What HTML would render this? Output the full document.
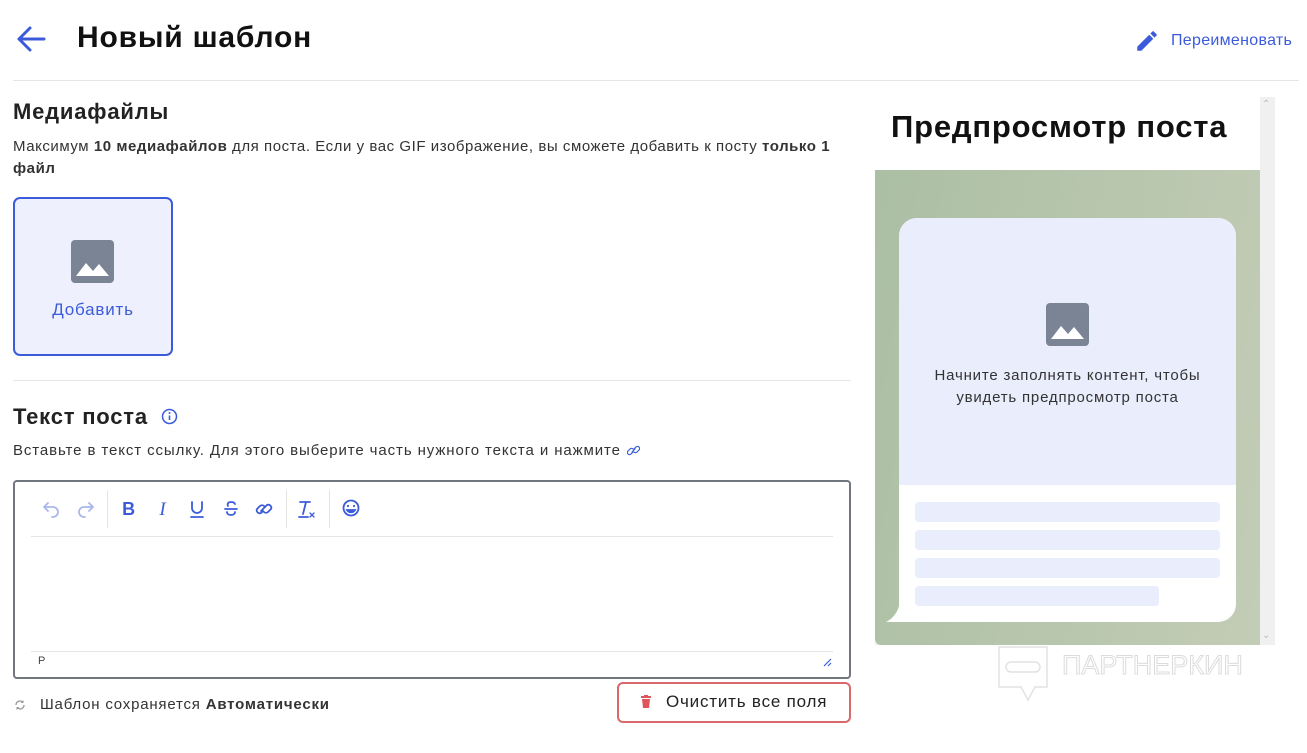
<!DOCTYPE html>
<html><head><meta charset="utf-8"><style>
*{box-sizing:border-box;margin:0;padding:0}
body{width:1307px;height:753px;overflow:hidden;background:#fff;font-family:"Liberation Sans",sans-serif;color:#222;position:relative;letter-spacing:0.8px}
.a{position:absolute}
.blue{color:#3b5bdb}
</style></head><body>
<svg class="a" style="left:15px;top:25px" width="32" height="28" viewBox="0 0 32 28"><path d="M29 14H4M15 3L4 14l11 11" fill="none" stroke="#3b5bdb" stroke-width="3" stroke-linecap="round" stroke-linejoin="round"/></svg>
<div class="a" style="left:77px;top:21px;font-size:30px;font-weight:bold;color:#111">Новый шаблон</div>
<svg class="a" style="left:1133px;top:28px" width="28" height="26" viewBox="0 0 24 24"><path d="M3 17.25V21h3.75L17.81 9.94l-3.75-3.75L3 17.25zM20.71 7.04a1 1 0 000-1.41l-2.34-2.34a1 1 0 00-1.41 0l-1.83 1.83 3.75 3.75 1.83-1.83z" fill="#3b5bdb"/></svg>
<div class="a blue" style="left:1171px;top:32px;font-size:16px;letter-spacing:0.3px">Переименовать</div>
<div class="a" style="left:13px;top:80px;width:1286px;height:1px;background:#e5e5e5"></div>

<div class="a" style="left:13px;top:99px;font-size:22px;font-weight:bold">Медиафайлы</div>
<div class="a" style="left:13px;top:136px;width:840px;font-size:15px;line-height:22px;color:#333;letter-spacing:0.55px">Максимум <b>10 медиафайлов</b> для поста. Если у вас GIF изображение, вы сможете добавить к посту <b>только 1<br>файл</b></div>
<div class="a" style="left:13px;top:197px;width:160px;height:159px;border:2px solid #3b5bdb;border-radius:7px;background:#eef1fd"></div>
<svg class="a" style="left:71px;top:240px" width="43" height="43" viewBox="0 0 43 43"><rect width="43" height="43" rx="4" fill="#7b8494"/><path d="M5 36l10-13 7 8 6-7 10 12z" fill="#fff"/></svg>
<div class="a blue" style="left:13px;top:300px;width:160px;text-align:center;font-size:17px">Добавить</div>
<div class="a" style="left:13px;top:380px;width:838px;height:1px;background:#e5e5e5"></div>

<div class="a" style="left:13px;top:404px;font-size:22px;font-weight:bold">Текст поста</div>
<svg class="a" style="left:161px;top:408px" width="17" height="17" viewBox="0 0 17 17"><circle cx="8.5" cy="8.5" r="7" fill="none" stroke="#3b5bdb" stroke-width="1.5"/><path d="M8.5 7.5v4.5" stroke="#3b5bdb" stroke-width="1.6"/><circle cx="8.5" cy="5" r="1" fill="#3b5bdb"/></svg>
<div class="a" style="left:13px;top:442px;font-size:15px;color:#333;letter-spacing:0.9px">Вставьте в текст ссылку. Для этого выберите часть нужного текста и нажмите</div>
<svg class="a" style="left:627px;top:444px" width="13" height="13" viewBox="0 0 13 13"><g fill="none" stroke="#3b5bdb" stroke-width="1.2" stroke-linecap="round"><path d="M6 8l-2 2a2 2 0 01-3-3l2-2a2 2 0 013 0M7 5l2-2a2 2 0 013 3l-2 2a2 2 0 01-3 0M5 8l3-3"/></g></svg>

<div class="a" style="left:13px;top:480px;width:838px;height:199px;border:2px solid #70757e;border-radius:4px"></div>
<div class="a" style="left:31px;top:536px;width:802px;height:1px;background:#e5e5e5"></div>
<div class="a" style="left:31px;top:651px;width:802px;height:1px;background:#e5e5e5"></div>
<div class="a" style="left:107px;top:490px;width:1px;height:38px;background:#e5e5e5"></div>
<div class="a" style="left:286px;top:490px;width:1px;height:38px;background:#e5e5e5"></div>
<div class="a" style="left:329px;top:490px;width:1px;height:38px;background:#e5e5e5"></div>
<svg class="a" style="left:40px;top:497px" width="330" height="24" viewBox="0 0 330 24">
<g fill="none" stroke-width="1.8" stroke-linecap="round" stroke-linejoin="round">
<path d="M8 6L4 10l4 4M4 10h9a5 5 0 010 10h-1" stroke="#a9b8ec"/>
<path d="M49 6l4 4-4 4M53 10h-9a5 5 0 000 10h1" stroke="#a9b8ec"/>
</g>
<text x="89" y="18" font-family="Liberation Sans" font-weight="bold" font-size="18" fill="#3b5bdb" text-anchor="middle">B</text>
<text x="123" y="18" font-family="Liberation Serif" font-style="italic" font-size="19" fill="#3b5bdb" text-anchor="middle">I</text>
<g fill="none" stroke="#3b5bdb" stroke-width="1.8" stroke-linecap="round">
<path d="M152 5v6a5 5 0 0010 0V5M151 20h12"/>
<path d="M185 12h12M195 7a4 3 0 00-4-2c-3 0-4 2-3 4M187 15c0 2 2 3 4 3s4-1 4-3"/>
<path d="M223 14l-2 2a3 3 0 01-4-4l3-3a3 3 0 014 0M225 10l2-2a3 3 0 014 4l-3 3a3 3 0 01-4 0M221 14l6-6"/>
<path d="M260 5h10M266 5l-3 12M259 20h9"/>
<path d="M270 16l4 4M274 16l-4 4" stroke-width="1.3"/>
<circle cx="311" cy="11" r="7.5"/>
<path d="M307 13a4.5 4 0 008 0z" fill="#3b5bdb"/>
</g>
<circle cx="308" cy="9" r="1.1" fill="#3b5bdb"/><circle cx="314" cy="9" r="1.1" fill="#3b5bdb"/>
</svg>
<div class="a" style="left:38px;top:655px;font-size:11px;color:#444">P</div>
<svg class="a" style="left:822px;top:657px" width="10" height="10" viewBox="0 0 10 10"><path d="M9 2L2 9M9 6L6 9" stroke="#3b5bdb" stroke-width="1.2"/></svg>

<svg class="a" style="left:14px;top:699px" width="12" height="12" viewBox="0 0 12 12"><g fill="none" stroke="#999" stroke-width="1.3"><path d="M2 6a4 4 0 017-2.6M10 6a4 4 0 01-7 2.6"/></g><path d="M9.5 1v3h-3z" fill="#999"/><path d="M2.5 11V8h3z" fill="#999"/></svg>
<div class="a" style="left:40px;top:696px;font-size:15px;color:#333">Шаблон сохраняется <b>Автоматически</b></div>
<div class="a" style="left:617px;top:682px;width:234px;height:41px;border:2px solid #d9686b;border-radius:6px"></div>
<svg class="a" style="left:641px;top:695px" width="10" height="13" viewBox="0 0 10 13"><rect x="0" y="1" width="10" height="2" fill="#e0555a"/><rect x="3" y="0" width="4" height="2" fill="#e0555a"/><path d="M1 4h8l-1 9H2z" fill="#e0555a"/></svg>
<div class="a" style="left:666px;top:692px;font-size:17px;color:#222">Очистить все поля</div>

<div class="a" style="left:875px;top:97px;width:400px;height:548px;background:#f0f0f0"></div>
<div class="a" style="left:875px;top:97px;width:385px;height:73px;background:#fff"></div>
<div class="a" style="left:891px;top:109px;font-size:31px;font-weight:bold;color:#111">Предпросмотр поста</div>
<div class="a" style="left:1262px;top:99px;font-size:10px;color:#bbb">⌃</div>
<div class="a" style="left:1262px;top:630px;font-size:10px;color:#bbb">⌄</div>
<div class="a" style="left:875px;top:170px;width:385px;height:475px;background:linear-gradient(100deg,#abbfa4,#c3ccb6);border-radius:0 0 0 6px"></div>
<div class="a" style="left:899px;top:218px;width:337px;height:404px;background:#fff;border-radius:18px 18px 18px 0;overflow:hidden"><div style="height:267px;background:#e9edfc"></div></div>
<svg class="a" style="left:886px;top:598px" width="14" height="24" viewBox="0 0 14 24"><path d="M14 0C14 12 8 20 0 24H14Z" fill="#fff"/></svg>
<svg class="a" style="left:1046px;top:303px" width="43" height="43" viewBox="0 0 43 43"><rect width="43" height="43" rx="4" fill="#7b8494"/><path d="M5 36l10-13 7 8 6-7 10 12z" fill="#fff"/></svg>
<div class="a" style="left:899px;top:365px;width:337px;text-align:center;font-size:15px;line-height:22px;color:#333">Начните заполнять контент, чтобы<br>увидеть предпросмотр поста</div>
<div class="a" style="left:915px;top:502px;width:305px;height:20px;border-radius:4px;background:#e9edfc"></div>
<div class="a" style="left:915px;top:530px;width:305px;height:20px;border-radius:4px;background:#e9edfc"></div>
<div class="a" style="left:915px;top:558px;width:305px;height:20px;border-radius:4px;background:#e9edfc"></div>
<div class="a" style="left:915px;top:586px;width:244px;height:20px;border-radius:4px;background:#e9edfc"></div>

<svg class="a" style="left:998px;top:646px" width="52" height="56" viewBox="0 0 52 56"><path d="M1 1h48v40H37l-7 13-7-13H1z" fill="none" stroke="#e2e2e2" stroke-width="1.5"/><rect x="8" y="16" width="34" height="10" rx="5" fill="none" stroke="#e2e2e2" stroke-width="1.5"/></svg>
<div class="a" style="left:1062px;top:650px;font-size:27px;color:#fff;-webkit-text-stroke:1px #dcdcdc;letter-spacing:0px">ПАРТНЕРКИН</div>
</body></html>
